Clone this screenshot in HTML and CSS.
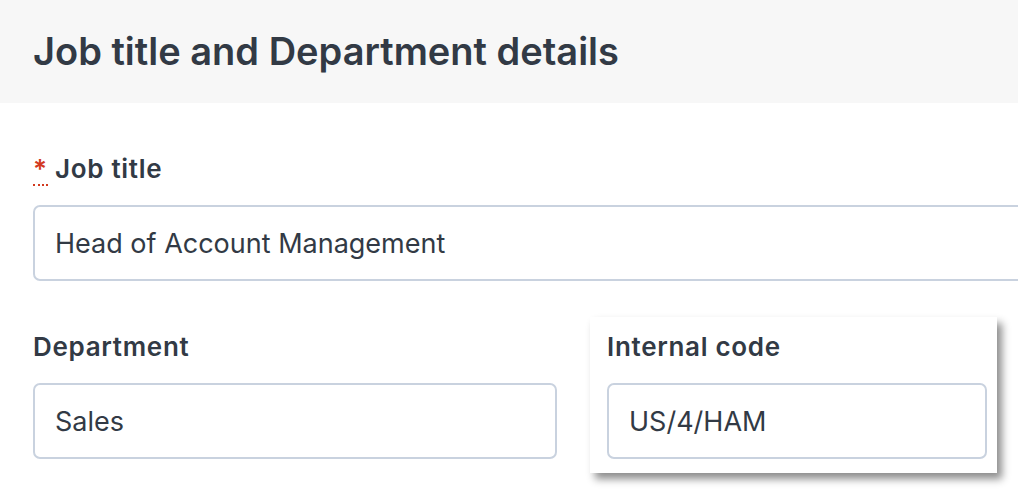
FILE: index.html
```html
<!DOCTYPE html>
<html>
<head>
	<title>Job details</title>
	<link rel="stylesheet" href="styles.css">
</head>
<body>
	<div class="page">
		<!-- Section header -->
		<div class="section-head">
			<h2>Job title and Department details</h2>
		</div>

		<form class="form">
			<div class="field">
				<label for="title"><abbr class="req" title="required">*</abbr> Job title</label>
				<input type="text" id="title" class="input input-wide" value="Head of Account Management">
			</div>

			<div class="row">
				<div class="field col-dept">
					<label for="dept">Department</label>
					<input type="text" id="dept" class="input" value="Sales">
				</div>
				<!-- Raised card for internal code -->
				<div class="field lift">
					<label for="code">Internal code</label>
					<input type="text" id="code" class="input" value="US/4/HAM">
				</div>
			</div>
		</form>
	</div>
</body>
</html>
```

FILE: styles.css
```css
html {
	overflow: hidden;
}
body {
	margin: 0;
	padding: 0;
	background: #fff;
}
.page {
	font-family: Inter, "Noto Sans", sans-serif;
	color: #323a45;
	padding-bottom: 40px;
}
.section-head {
	background-color: #f7f7f7;
	height: 103px;
	box-sizing: border-box;
	padding: 28px 33px 0;
}
.section-head h2 {
	margin: 0;
	font-size: 38px;
	line-height: 46px;
	font-weight: 600;
	white-space: nowrap;
}
.form {
	padding: 50px 0 0 33px;
}
.field label {
	display: block;
	font-size: 26px;
	font-weight: 600;
	letter-spacing: 0.7px;
	line-height: 32px;
	margin-bottom: 20px;
}
.req {
	color: #d23a1f;
	text-decoration: none;
	border-bottom: 2px dotted #d23a1f;
}
.input {
	display: block;
	box-sizing: border-box;
	height: 76px;
	width: 100%;
	border: 2px solid #c9d2df;
	border-radius: 7px;
	padding: 0 20px;
	font-family: inherit;
	font-size: 27px;
	color: #323a45;
	background: #fff;
	outline: none;
}
.input-wide {
	width: 1100px;
}
.row {
	display: flex;
	align-items: flex-start;
	margin-top: 50px;
}
.col-dept {
	width: 524px;
}
.lift {
	width: 380px;
	margin-left: 33px;
	margin-top: -14px;
	padding: 14px 10px 14px 17px;
	background: #fff;
	box-shadow: 5px 6px 8px rgba(0, 0, 0, 0.45);
}
```
